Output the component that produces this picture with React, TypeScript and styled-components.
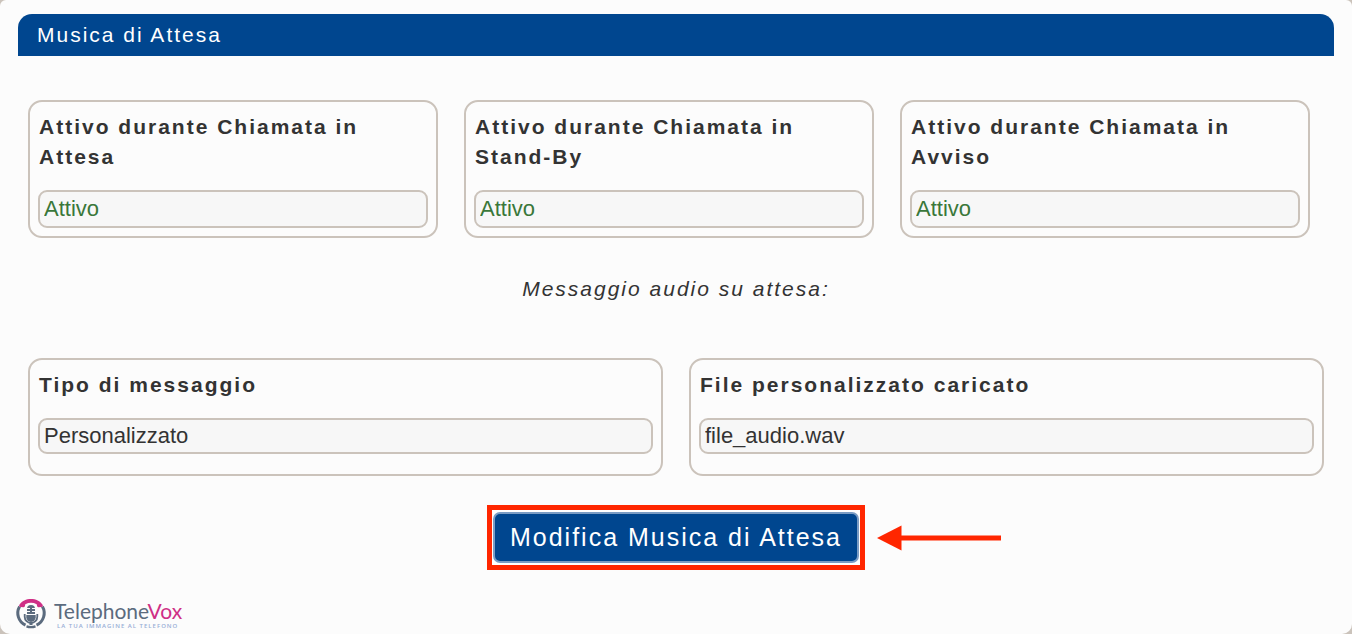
import React, { useId } from "react";
import styled, { createGlobalStyle } from "styled-components";

const GlobalStyle = createGlobalStyle`
  *, *::before, *::after { box-sizing: border-box; }
  html { background: #cbc3bb; }
  body {
    margin: 0;
    color: #333;
    font-family: "Liberation Sans", Arial, Helvetica, sans-serif;
    font-size: 22px;
  }
`;

const Page = styled.main`
  display: flex;
  flex-direction: column;
  min-height: 100vh;
  padding: 14px 18px 4px;
  background: #fcfcfc;
  border-radius: 6px 6px 10px 10px;
`;

const TitleBar = styled.h1`
  margin: 0 0 44px;
  padding: 6px 19px;
  border-radius: 14px 14px 0 0;
  background: #00468f;
  color: #fff;
  font-size: 21px;
  font-weight: 400;
  line-height: 30px;
  letter-spacing: 2px;
`;

const CardRow = styled.section<{ $columns: number; $inset?: number }>`
  display: grid;
  grid-template-columns: repeat(${(p) => p.$columns}, minmax(0, 1fr));
  gap: 26px;
  padding: 0 ${(p) => p.$inset ?? 10}px 0 10px;
`;

const Card = styled.div<{ $bottom: number }>`
  display: flex;
  flex-direction: column;
  gap: 18px;
  padding: 10px 8px ${(p) => p.$bottom}px;
  border: 2px solid #cbc3bb;
  border-radius: 14px;
`;

const Label = styled.label`
  padding-left: 1px;
  font-size: 21px;
  font-weight: 700;
  line-height: 30px;
  letter-spacing: 2px;
`;

const Value = styled.input<{ $active?: boolean; $height: number }>`
  width: 100%;
  height: ${(p) => p.$height}px;
  padding: 0 4px;
  border: 2px solid #cbc3bb;
  border-radius: 9px;
  outline: none;
  background: #f7f7f7;
  color: ${(p) => (p.$active ? "#3a773a" : "#333")};
  font: inherit;
`;

const Caption = styled.p`
  margin: 36px 0 54px;
  font-size: 21px;
  font-style: italic;
  line-height: 30px;
  letter-spacing: 2px;
  text-align: center;
`;

const Actions = styled.div`
  display: grid;
  grid-template-columns: 1fr auto 1fr;
  align-items: center;
  gap: 12px;
  margin: 29px 0 26px;
`;

const Highlight = styled.div`
  grid-column: 2;
  padding: 2px 1px;
  border: 5px solid #ff2600;
  background: #fff;
`;

const EditButton = styled.button`
  display: block;
  height: 51px;
  padding: 0 15px;
  border: 2px solid #7a9cc4;
  border-radius: 7px;
  background: #00468f;
  color: #fff;
  font-family: inherit;
  font-size: 25px;
  letter-spacing: 2px;
  cursor: pointer;
`;

const Brand = styled.footer`
  display: flex;
  align-items: center;
  gap: 7px;
  margin: auto 0 0 -3px;
`;

const BrandText = styled.div`
  display: flex;
  flex-direction: column;
  white-space: nowrap;
`;

const BrandName = styled.span`
  color: #5b6b7e;
  font-family: Lato, sans-serif;
  font-size: 21px;
  line-height: 24px;
`;

const BrandAccent = styled.span`
  color: #cf2f86;
`;

const Tagline = styled.small`
  padding-left: 3px;
  color: #98aed6;
  font-family: "Open Sans", sans-serif;
  font-weight: 600;
  font-size: 6px;
  line-height: 7px;
  letter-spacing: 1px;
`;

type FieldProps = { label: string; value: string; active?: boolean; height: number; bottom: number };

function Field({ label, value, active, height, bottom }: FieldProps) {
  const id = useId();
  return (
    <Card $bottom={bottom}>
      <Label htmlFor={id}>{label}</Label>
      <Value id={id} value={value} readOnly $active={active} $height={height} />
    </Card>
  );
}

function Arrow() {
  return (
    <svg width="124" height="26" viewBox="0 0 124 26" aria-hidden="true">
      <path d="M0 13 24.500 0.500v25z" fill="#ff2600" />
      <path d="M24 13h100" stroke="#ff2600" strokeWidth="5" />
    </svg>
  );
}

function BrandMark() {
  return (
    <svg width="32" height="32" viewBox="0 0 32 32" fill="none" aria-hidden="true">
      <path d="M4.600 8.500A13.300 13.300 0 0 0 10.500 27.200M21.500 27.200A13.300 13.300 0 0 0 27.400 8.500" stroke="#5b6b7e" strokeWidth="3" />
      <path d="M11.500 28.300q4.500 1.600 9 0" stroke="#5b6b7e" strokeWidth="2.400" />
      <path d="M4.400 6.800C9-1 23-1 27.600 6.800q.8 1.700-1 2.200l-3 .2q-1.200-.1-1.500-1.300l-.4-1.600Q16 3.400 10.300 6.300l-.4 1.600q-.3 1.200-1.500 1.300l-3-.2q-1.800-.5-1-2.200z" fill="#cf2f86" />
      <path d="M12 16V11a4 4 0 0 1 8 0v5z" fill="#5b6b7e" />
      <path d="M11 10.500h4M17 10.500h4M11 13.500h4M17 13.500h4" stroke="#fcfcfc" strokeWidth="1" />
      <path d="M11.300 17h9.400v2.300a4.700 4.700 0 0 1-9.400 0z" fill="#5b6b7e" />
      <path d="M9.700 16v2.700a6.300 6.300 0 0 0 12.600 0V16" stroke="#5b6b7e" strokeWidth="1.800" />
      <path d="M16 24v3" stroke="#5b6b7e" strokeWidth="3" />
    </svg>
  );
}

const callStates = [
  "Attivo durante Chiamata in Attesa",
  "Attivo durante Chiamata in Stand-By",
  "Attivo durante Chiamata in Avviso",
];

export default function App() {
  return (
    <>
      <GlobalStyle />
      <Page>
        <TitleBar>Musica di Attesa</TitleBar>
        <CardRow $columns={3} $inset={24}>
          {callStates.map((label) => (
            <Field key={label} label={label} value="Attivo" active height={38} bottom={8} />
          ))}
        </CardRow>
        <Caption>Messaggio audio su attesa:</Caption>
        <CardRow $columns={2}>
          <Field label="Tipo di messaggio" value="Personalizzato" height={36} bottom={20} />
          <Field label="File personalizzato caricato" value="file_audio.wav" height={36} bottom={20} />
        </CardRow>
        <Actions>
          <Highlight>
            <EditButton type="button">Modifica Musica di Attesa</EditButton>
          </Highlight>
          <Arrow />
        </Actions>
        <Brand>
          <BrandMark />
          <BrandText>
            <BrandName>
              Telephone<BrandAccent>Vox</BrandAccent>
            </BrandName>
            <Tagline>LA TUA IMMAGINE AL TELEFONO</Tagline>
          </BrandText>
        </Brand>
      </Page>
    </>
  );
}
